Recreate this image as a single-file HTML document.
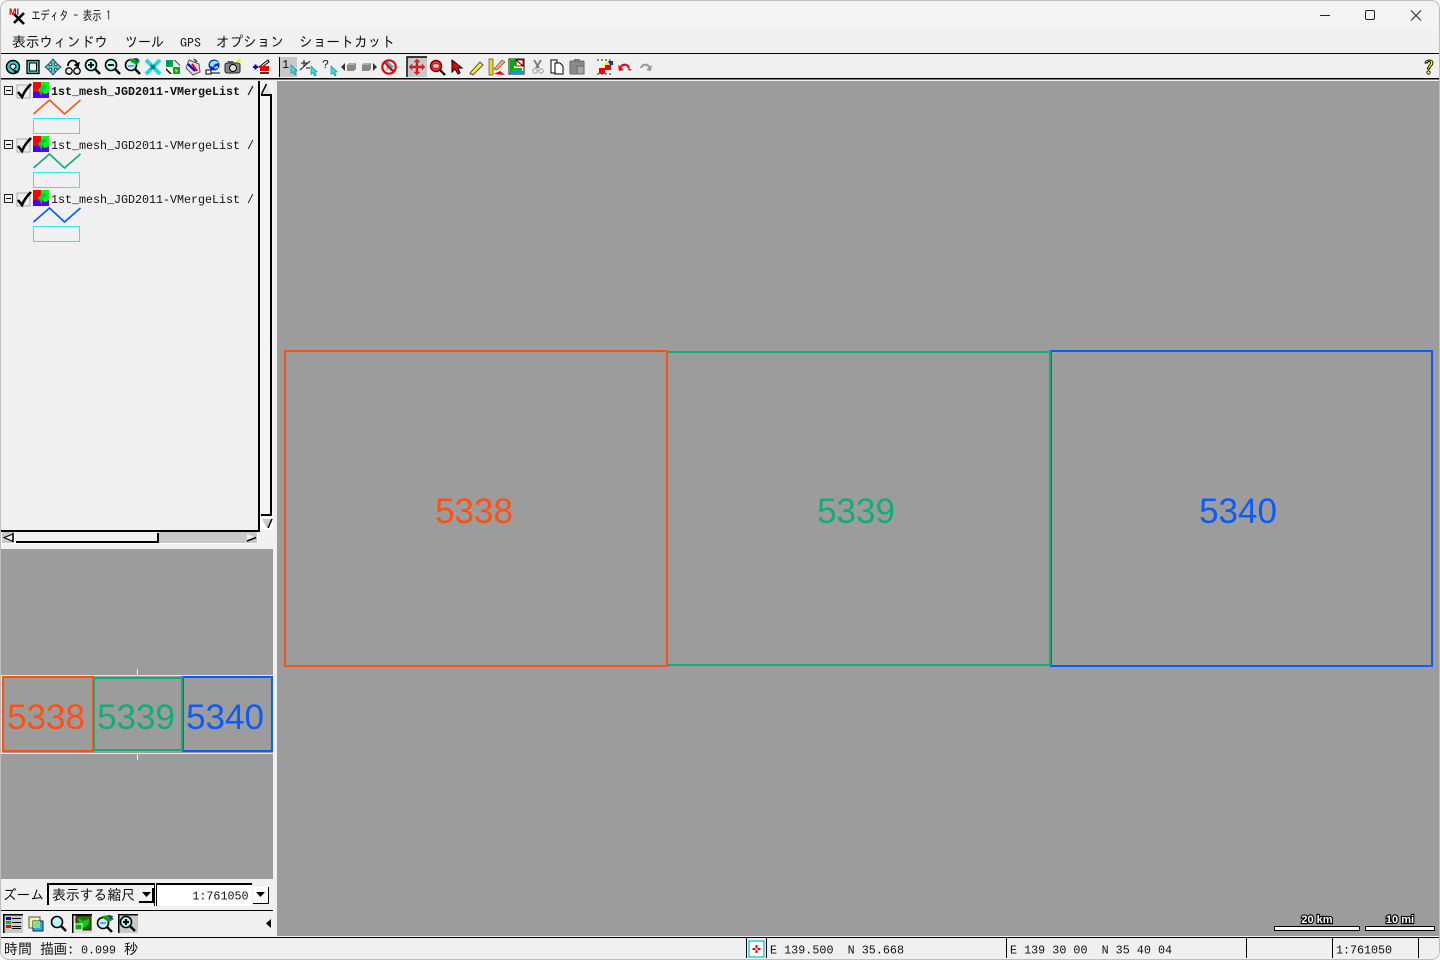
<!DOCTYPE html>
<html><head><meta charset="utf-8"><title>エディタ - 表示 1</title>
<style>
html,body{margin:0;padding:0;background:#fff;overflow:hidden}
svg{display:block}
.jp{font-family:"IPAGothic","Liberation Sans","Noto Sans CJK JP",sans-serif;fill:#111}
.mono{font-family:"Liberation Mono","IPAGothic",monospace;fill:#111}
.lab{font-family:"Liberation Sans",sans-serif;font-size:35px}
.scale{font-family:"Liberation Sans",sans-serif;font-size:11px;font-weight:bold;fill:#fff;stroke:#000;stroke-width:2.2px;paint-order:stroke}
</style></head><body>
<svg width="1440" height="960" viewBox="0 0 1440 960" xmlns="http://www.w3.org/2000/svg">
<defs>
<g id="mag"><circle cx="-1" cy="-1" r="5.5" fill="#bff" stroke="#000" stroke-width="1.6"/><path d="M3 3l5 5" stroke="#000" stroke-width="2.4" fill="none"/></g>
<g id="cur"><path d="M0 0v8.500l2-1.700 1.700 3.200 1.600-.8-1.600-3.200h2.600z" fill="#2fe0e8" stroke="#0a8a9a" stroke-width=".6"/></g>
<g id="lay"><rect x="0" y="0" width="16" height="16" fill="#0f0"/><path d="M0 0h8v5l-3 3 3 3-2 5H0z" fill="#f00"/><path d="M0 10h5l3 3v3H0z" fill="#40f"/><path d="M8 4c5-3 7 1 4 3l-3 1 3 2-4 1-2-3z" fill="#0c4"/><path d="M9 10c2 3 5 2 7 0v6H8z" fill="#50f"/></g>
<g id="chk"><rect x="0" y="1" width="13" height="13" fill="#eee" stroke="#aaa"/><path d="M1 8l4 5c2-5 5-9 9-13" fill="none" stroke="#000" stroke-width="2.6"/></g>
<g id="minus"><rect x=".5" y=".5" width="8" height="8" fill="#f0f0f0" stroke="#222"/><path d="M2 4.500h5" stroke="#000"/></g>
</defs>

<!-- window -->
<rect x="0" y="0" width="1440" height="960" fill="#f0f0f0"/>
<rect x="0" y="0" width="1440" height="30" fill="#f3f3f3"/>
<rect x="0" y="53" width="1440" height="1" fill="#000"/>
<rect x="0" y="78" width="1440" height="1.500" fill="#000"/>

<!-- title -->
<g transform="translate(9,7)">
<text x="0" y="8" font-family="Liberation Sans,sans-serif" font-size="9" font-weight="bold" fill="#d00">MI</text>
<path d="M5 7l10 10M15 6L5 16" stroke="#000" stroke-width="2.600" fill="none"/>
</g>
<text class="jp" x="31" y="20" font-size="13" textLength="80" lengthAdjust="spacingAndGlyphs">エディタ - 表示 1</text>
<path d="M1320 15.500h10" stroke="#222" stroke-width="1"/>
<rect x="1365.500" y="10.500" width="9" height="9" rx="1.500" fill="none" stroke="#222" stroke-width="1"/>
<path d="M1411 10.500l10 10M1421 10.500l-10 10" stroke="#222" stroke-width="1"/>

<!-- menu -->
<g class="jp">
<text class="jp" font-size="14.500" x="12" y="47" textLength="96" lengthAdjust="spacingAndGlyphs">表示ウィンドウ</text>
<text class="jp" font-size="14.500" x="125" y="47" textLength="39" lengthAdjust="spacingAndGlyphs">ツール</text>
<text class="jp" x="180" y="47" font-size="12" textLength="21" lengthAdjust="spacingAndGlyphs">GPS</text>
<text class="jp" font-size="14.500" x="216" y="47" textLength="68" lengthAdjust="spacingAndGlyphs">オプション</text>
<text class="jp" font-size="14.500" x="299" y="47" textLength="96" lengthAdjust="spacingAndGlyphs">ショートカット</text>
</g>

<!-- toolbar 1 -->
<g transform="translate(13,67)"><circle r="6.500" fill="#3cc" stroke="#000" stroke-width="1.500"/><path d="M-3 0a3 3 0 0 1 6 0l-3 3z" fill="#f0f0f0" stroke="#000"/><path d="M-1 2l4 5 3-2z" fill="#000"/></g>
<g transform="translate(33,67)"><rect x="-6" y="-6.500" width="12" height="13" fill="#4cc" stroke="#000" stroke-width="1.300"/><rect x="-3.500" y="-4" width="7" height="8" fill="#eee" stroke="#000"/></g>
<g transform="translate(53,67)"><path d="M0-8l3.500 4H1.500v2.500H4V-3.500l4 3.500-4 3.500V1.500H1.500V4h2L0 8l-3.500-4h2V1.500H-4v2L-8 0l4-3.500v2h2.500V-4h-2z" fill="#4cc" stroke="#234" stroke-width=".8"/></g>
<g transform="translate(73,67)" fill="none" stroke="#000" stroke-width="1.300"><circle cx="-4" cy="4" r="3.200" fill="#eee"/><circle cx="4" cy="4" r="3.200" fill="#eee"/><path d="M-5-1c0-7 8-7 9-2" stroke-width="1.800"/><path d="M6-4l-1 4-3-2z" fill="#000"/></g>
<g transform="translate(92,66)"><use href="#mag"/><path d="M-4-1h6M-1-4v6" stroke="#000" stroke-width="1.800"/></g>
<g transform="translate(112,66)"><use href="#mag"/><path d="M-4-1h6" stroke="#000" stroke-width="1.800"/></g>
<g transform="translate(132,66)"><use href="#mag"/><path d="M-3-7l8-1 3 3-3 4-6-3z" fill="#0a0"/><path d="M2-8l5 1-2 3z" fill="#60f"/><path d="M-4 0h6" stroke="#80f"/></g>
<g transform="translate(153,67)"><path d="M-7-7L7 7M7-7L-7 7" stroke="#25d5e0" stroke-width="4"/><path d="M-2-2L2 2M2-2L-2 2" stroke="#066" stroke-width="1.500"/><path d="M-8-1h5M3-1h5M-8 1h5M3 1h5" stroke="#f0f0f0" stroke-width=".01"/></g>
<g transform="translate(173,67)"><path d="M-7-7h7v7h-7z" fill="#0a3"/><path d="M-6-6l3 1-1 3-2-1z" fill="#06f"/><path d="M0 0h7v7H0z" fill="#0a3"/><path d="M2 2l3 1-2 3z" fill="#fc0"/><path d="M1-7l6 6v-1L2-7zM-7 1l6 6h-2l-4-4z" fill="#000"/></g>
<g transform="translate(193,67)"><path d="M-4-7l10 4 1 8-7 3-7-7z" fill="#ddd" stroke="#555"/><path d="M-5-3l7 7" stroke="#00e" stroke-width="2.200"/><path d="M-1-3l5 7" stroke="#e00" stroke-width="2"/><path d="M1-8l3 3" stroke="#333" stroke-width="1.500"/></g>
<g transform="translate(213,67)"><circle cx="1" cy="-2" r="5.500" fill="#12d"/><path d="M-3-4c3-3 6-3 9 0l-4 1-2 3-3-1zM1 0l4-1v2l-3 1z" fill="#8ef"/><rect x="-7" y="3" width="5" height="4" fill="#fff" stroke="#000"/><path d="M-2 6h9" stroke="#000"/></g>
<g transform="translate(233,67)"><rect x="-8" y="-4" width="15" height="10" rx="2" fill="#888" stroke="#222"/><circle cx="0" cy="1" r="3.500" fill="#ddd" stroke="#000"/><path d="M-5-6h5l1 2h-7z" fill="#555"/><circle cx="6" cy="-6" r="2.200" fill="#ee3"/></g>
<g transform="translate(261,67)"><path d="M-8 0h5M-5.500-2.500v5" stroke="#00d" stroke-width="2"/><path d="M-2 0L7-7l1 2-7 5z" fill="#fff" stroke="#000"/><rect x="-1" y="-1" width="9" height="5" fill="#e00"/><path d="M-1 6h9" stroke="#000" stroke-width="1.500"/></g>

<rect x="279" y="57" width="1" height="20" fill="#000"/>
<rect x="280" y="57" width="17" height="20" fill="#c8c8c8"/>
<text class="mono" x="282" y="68" font-size="12">1</text>
<use href="#cur" transform="translate(291,65)"/>
<path d="M301 63h6M304 60v6M300 70l10-9M306 68h4" stroke="#111" fill="none"/>
<use href="#cur" transform="translate(311,66)"/>
<text class="mono" x="322" y="68" font-size="12">?</text>
<use href="#cur" transform="translate(331,66)"/>
<path d="M341 67l4-4v8z" fill="#333"/><path d="M347 65l2-2h7v6l-2 2h-7z" fill="#888"/><path d="M349 63h7l-2 2h-7z" fill="#aaa"/>
<path d="M362 65l2-2h7v6l-2 2h-7z" fill="#888"/><path d="M364 63h7l-2 2h-7z" fill="#aaa"/><path d="M377 67l-4-4v8z" fill="#333"/>
<circle cx="389" cy="67" r="6.700" fill="#eee" stroke="#e00" stroke-width="2.200"/><use href="#cur" transform="translate(387,61)"/><path d="M384.500 62l9.500 10" stroke="#e00" stroke-width="2.200"/>

<rect x="407" y="57" width="20" height="20" fill="#c8c8c8"/><path d="M407 77V57h20" fill="none" stroke="#000" stroke-width="1.400"/>
<path d="M417 59l3 3h-2v4h4v-2l3 3-3 3v-2h-4v4h2l-3 3-3-3h2v-4h-4v2l-3-3 3-3v2h4v-4h-2z" fill="#e02020" stroke="#800" stroke-width=".3"/>
<g transform="translate(436,66)"><circle cx="0" cy="0" r="5.500" fill="#f33" stroke="#800" stroke-width="1.500"/><rect x="-3" y="-2" width="6" height="4" fill="#fdd" stroke="#900" stroke-width=".7"/><path d="M4 4l5 5" stroke="#000" stroke-width="2.200"/></g>
<path d="M452 60v12l3-3 3 5 2-1-2-5h4z" fill="#e00" stroke="#000"/>
<g transform="translate(477,67)"><path d="M-7 6l10-11 3 3L-4 8z" fill="#ee3" stroke="#333" stroke-width=".8"/><path d="M-7 6l-1 2 3 0z" fill="#f88"/></g>
<g transform="translate(497,67)"><rect x="-8" y="-8" width="4" height="16" fill="#e8d820" stroke="#333" stroke-width=".6"/><path d="M-3 7l6-3 5 4z" fill="#e00"/><path d="M-3 2L5-7l3 2-8 8z" fill="#fa6" stroke="#444" stroke-width=".6"/></g>
<g transform="translate(517,67)"><rect x="-8" y="-8" width="15" height="15" fill="#fff" stroke="#111"/><path d="M-7-7h6v6h-2v8h-4z" fill="#0a0"/><path d="M-7 4h14v3H-7z" fill="#09f"/><path d="M-4 1h9v3h-9z" fill="#0b3"/><rect x="-1" y="-7" width="7" height="6" fill="#fff" stroke="#d00"/><path d="M-1-7l7 6" stroke="#000"/></g>
<g stroke="#999" fill="none"><path d="M534 60l5 8M541 60l-5 8" stroke-width="1.800" stroke="#777"/><circle cx="535" cy="71" r="2.200"/><circle cx="541" cy="71" r="2.200"/></g>
<path d="M551 60h6v4h-2v9h-4z" fill="#fff" stroke="#000"/><path d="M555 63h5l3 3v8h-8z" fill="#fff" stroke="#000"/>
<rect x="570" y="61" width="14" height="13" rx="1" fill="#8a8a8a" stroke="#666"/><path d="M574 61h6v-2h-6z" fill="#777"/><rect x="577" y="66" width="7" height="8" fill="#a5a5a5" stroke="#666"/>

<g transform="translate(605,67)"><path d="M-8-7h16M-8 7h16" stroke="#222" stroke-dasharray="2 2"/><path d="M-6 1h6v6h-6z" fill="#e00"/><path d="M0-2h6v5H0z" fill="#e00"/><path d="M-3-2L3-6h5l-3 4H-1z" fill="#ee2"/><path d="M3-6h5v4H5z" fill="#22d"/></g>
<path d="M620 69c1-5 7-6 9-1" fill="none" stroke="#f00318" stroke-width="2.200"/><path d="M618 65l1 6 5-1z" fill="#f00318"/><path d="M631 70l-3-1" stroke="#f00318" stroke-width="1.500"/>
<path d="M650 69c-1-5-7-6-9-1" fill="none" stroke="#999" stroke-width="2.200"/><path d="M652 65l-1 6-5-1z" fill="#999"/>

<path d="M1425 63c1-4 8-4 8 0 0 3-3 3-3.500 6h-2c0-3 3-4 3-6s-3-2-3 0z" fill="#ff3" stroke="#000" stroke-width=".9"/><circle cx="1428.500" cy="72.500" r="1.700" fill="#ff3" stroke="#000" stroke-width=".8"/>

<!-- layer panel -->
<g>
<use href="#minus" x="4" y="86"/><use href="#chk" x="17" y="84"/><use href="#lay" x="33" y="82"/>
<text class="mono" x="51" y="95" font-size="11.700" font-weight="bold" textLength="203" lengthAdjust="spacing">1st_mesh_JGD2011-VMergeList /</text>
<path d="M33.500 114l16-14 15 14 16-14" fill="none" stroke="#ff5a14" stroke-width="1.700"/>
<rect x="33.500" y="118.500" width="46" height="15" fill="#f0f0f0" stroke="#2fe8e8"/>
<use href="#minus" x="4" y="140"/><use href="#chk" x="17" y="138"/><use href="#lay" x="33" y="136"/>
<text class="mono" x="51" y="149" font-size="11.700" textLength="203" lengthAdjust="spacing">1st_mesh_JGD2011-VMergeList /</text>
<path d="M33.500 168l16-14 15 14 16-14" fill="none" stroke="#0fae78" stroke-width="1.700"/>
<rect x="33.500" y="172.500" width="46" height="15" fill="#f0f0f0" stroke="#2fe8e8"/>
<use href="#minus" x="4" y="194"/><use href="#chk" x="17" y="192"/><use href="#lay" x="33" y="190"/>
<text class="mono" x="51" y="203" font-size="11.700" textLength="203" lengthAdjust="spacing">1st_mesh_JGD2011-VMergeList /</text>
<path d="M33.500 222l16-14 15 14 16-14" fill="none" stroke="#0a5cff" stroke-width="1.700"/>
<rect x="33.500" y="226.500" width="46" height="15" fill="#f0f0f0" stroke="#2fe8e8"/>
</g>

<!-- scrollbars -->
<g shape-rendering="crispEdges">
<rect x="258" y="81" width="2" height="451" fill="#000"/>
<rect x="0" y="530" width="260" height="2" fill="#000"/>
<rect x="260" y="81" width="13" height="437" fill="#f4f4f4"/>
<rect x="270" y="96" width="2" height="420" fill="#000"/>
<rect x="261" y="514" width="11" height="2" fill="#000"/>
<rect x="261" y="94" width="11" height="2" fill="#000"/>
<rect x="260" y="517" width="13" height="13" fill="#fff"/>
<rect x="0" y="532" width="258" height="12" fill="#fff"/>
<rect x="2" y="532" width="12" height="11" fill="#c8c8c8"/>
<rect x="16" y="532" width="142" height="9" fill="#f0f0f0"/>
<rect x="16" y="541" width="143" height="2" fill="#000"/>
<rect x="157" y="533" width="2" height="10" fill="#000"/>
<rect x="159" y="532" width="87" height="11" fill="#c8c8c8"/>
<rect x="246" y="532" width="11" height="11" fill="#c8c8c8"/>
</g>
<path d="M261.500 94l5-10 5 10z" fill="#e4e4e4"/><path d="M261.500 94l5-10" stroke="#000" stroke-width="1.400" fill="none"/>
<path d="M262 519h10l-5 9z" fill="#c8c8c8"/><path d="M272 519l-4 9" stroke="#000" stroke-width="1.500"/>
<path d="M13 534L4 537.500l9 4" fill="#eee" stroke="#000" stroke-width="1"/><path d="M13 533v9" stroke="#000" stroke-width="1.500"/>
<path d="M247 534l9 3.500-9 4z" fill="#eee"/><path d="M247 541l9-3.500" stroke="#000" stroke-width="1.500"/>

<!-- overview -->
<g shape-rendering="crispEdges">
<rect x="1" y="549" width="272" height="330" fill="#9c9c9c"/>
<rect x="1" y="675" width="272" height="1" fill="#ffff44"/>
<rect x="1" y="753" width="272" height="1" fill="#ffff44"/>
<rect x="1" y="675" width="1" height="79" fill="#ffff44"/>
<rect x="137" y="669" width="1" height="6" fill="#ffff44"/>
<rect x="137" y="754" width="1" height="6" fill="#ffff44"/>
</g>
<g fill="none" stroke-width="2" shape-rendering="crispEdges">
<rect x="183" y="677" width="89" height="74" stroke="#0a5cff"/>
<rect x="94" y="678" width="88" height="72" stroke="#0fae78"/>
<rect x="3" y="677" width="90" height="74" stroke="#ff5014"/>
</g>
<text class="lab" x="46" y="729" text-anchor="middle" fill="#ff5014">5338</text>
<text class="lab" x="136" y="729" text-anchor="middle" fill="#0fae78">5339</text>
<text class="lab" x="225" y="729" text-anchor="middle" fill="#0a5cff">5340</text>

<!-- zoom row -->
<text class="jp" x="3" y="900" font-size="14.500" textLength="41" lengthAdjust="spacingAndGlyphs">ズーム</text>
<g shape-rendering="crispEdges">
<rect x="47" y="883" width="108" height="2" fill="#000"/>
<rect x="47" y="883" width="2" height="22" fill="#000"/>
<rect x="49" y="905" width="107" height="1" fill="#fff"/>
<rect x="154" y="883" width="1" height="23" fill="#000"/>
<rect x="139" y="888" width="15" height="14" fill="#f4f4f4"/>
<rect x="139" y="901" width="14" height="2" fill="#000"/><rect x="152" y="888" width="2" height="15" fill="#000"/>
<rect x="156" y="885" width="96" height="21" fill="#fff"/>
<rect x="156" y="883" width="96" height="2" fill="#000"/>
<rect x="156" y="883" width="1" height="23" fill="#000"/>
<rect x="253" y="887" width="16" height="16" fill="#fff"/>
<rect x="253" y="903" width="16" height="1" fill="#000"/><rect x="268" y="887" width="1" height="17" fill="#000"/>
</g>
<text class="jp" x="52" y="900" font-size="14.500" textLength="83" lengthAdjust="spacingAndGlyphs">表示する縮尺</text>
<path d="M142 892h9l-4.500 5z" fill="#000"/><path d="M256 892h9l-4.500 5z" fill="#000"/>
<text class="mono" x="248.500" y="899.500" font-size="11.700" text-anchor="end">1:761050</text>

<!-- bottom toolbar -->
<rect x="0" y="910" width="273" height="1" fill="#000"/>
<g shape-rendering="crispEdges">
<rect x="3" y="914" width="20" height="19" fill="#c8c8c8"/><rect x="3" y="914" width="20" height="1.500" fill="#000"/><rect x="3" y="914" width="1.500" height="19" fill="#000"/>
<rect x="6" y="917" width="5" height="3" fill="#00d"/><rect x="6" y="921" width="5" height="3" fill="#0b0"/><rect x="6" y="925" width="5" height="3" fill="#e00"/>
<rect x="12" y="918" width="9" height="1" fill="#000"/><rect x="12" y="922" width="9" height="1" fill="#000"/><rect x="12" y="926" width="9" height="1" fill="#000"/><rect x="12" y="928" width="9" height="1" fill="#000"/>
<rect x="72" y="914" width="20" height="19" fill="#ddd"/><rect x="72" y="914" width="20" height="1.500" fill="#000"/><rect x="72" y="914" width="1.500" height="19" fill="#000"/>
<rect x="118" y="914" width="20" height="19" fill="#c8c8c8"/><rect x="118" y="914" width="1.500" height="19" fill="#000"/><rect x="118" y="914" width="20" height="1.500" fill="#000"/>
</g>
<rect x="29" y="917" width="11" height="11" fill="#f6f6a0" stroke="#555"/><rect x="33" y="921" width="10" height="10" fill="#18b4e8" stroke="#222"/><rect x="33" y="921" width="7" height="7" fill="#8fd890"/>
<g transform="translate(58,923)"><use href="#mag"/></g>
<rect x="76" y="916" width="15" height="14" fill="#0a7a10" stroke="#700"/><path d="M78 918l5 3 6-2v5l-5 4-4-3z" fill="#1cc01c"/><rect x="75" y="924" width="7" height="6" fill="#0a0" stroke="#fff"/>
<g transform="translate(104,924)"><use href="#mag"/><path d="M-2-8l8-1 4 4-5 3-5-3z" fill="#0a0"/><path d="M4-9l5 1-2 4z" fill="#60f"/><path d="M-4-1h6" stroke="#80f"/></g>
<g transform="translate(127,923)"><use href="#mag"/><path d="M-4-1h6M-1-4v6" stroke="#000" stroke-width="2.200"/></g>
<path d="M271 919v9l-5-4.500z" fill="#000"/>

<!-- main map -->
<rect x="277" y="81" width="1162" height="855" fill="#9c9c9c"/>
<g fill="none" stroke-width="2" shape-rendering="crispEdges">
<rect x="1051" y="351" width="381" height="315" stroke="#0a5cff"/>
<rect x="667" y="352" width="383" height="313" stroke="#0fae78"/>
<rect x="285" y="351" width="382" height="315" stroke="#ff5014"/>
</g>
<text class="lab" x="474" y="523" text-anchor="middle" fill="#ff5014">5338</text>
<text class="lab" x="856" y="523" text-anchor="middle" fill="#0fae78">5339</text>
<text class="lab" x="1238" y="523" text-anchor="middle" fill="#0a5cff">5340</text>

<!-- scale -->
<rect x="1274.500" y="926.500" width="85" height="4" fill="#fff" stroke="#000"/>
<rect x="1365.500" y="926.500" width="69" height="4" fill="#fff" stroke="#000"/>
<text class="scale" x="1317" y="923" text-anchor="middle">20 km</text>
<text class="scale" x="1400" y="923" text-anchor="middle">10 mi</text>

<!-- status -->
<rect x="0" y="937" width="1440" height="1" fill="#000"/>
<g fill="#000" shape-rendering="crispEdges">
<rect x="746" y="938" width="1" height="20"/><rect x="766" y="938" width="1" height="20"/>
<rect x="1006" y="938" width="1" height="20"/><rect x="1246" y="938" width="1" height="20"/>
<rect x="1332" y="938" width="1" height="20"/><rect x="1418" y="938" width="1" height="20"/>
</g>
<rect x="749" y="941" width="15" height="16" fill="#fff" stroke="#1fd0e0" stroke-width="1.500"/>
<path d="M756.500 945v8M752.500 949h8" stroke="#e00" stroke-width="2"/><rect x="755.500" y="948" width="2" height="2" fill="#fff"/>
<text class="jp" x="4" y="954" font-size="14.500" textLength="28" lengthAdjust="spacingAndGlyphs">時間</text>
<text class="jp" x="40" y="954" font-size="14.500" textLength="34" lengthAdjust="spacingAndGlyphs">描画:</text>
<text class="mono" x="81" y="953.500" font-size="11.700" textLength="35" lengthAdjust="spacing">0.099</text>
<text class="jp" x="124" y="954" font-size="14.500">秒</text>
<text class="mono" x="770" y="953.500" font-size="11.700" xml:space="preserve" textLength="134" lengthAdjust="spacing">E 139.500  N 35.668</text>
<text class="mono" x="1010" y="953.500" font-size="11.700" xml:space="preserve" textLength="162" lengthAdjust="spacing">E 139 30 00  N 35 40 04</text>
<text class="mono" x="1336" y="953.500" font-size="11.700" textLength="56" lengthAdjust="spacing">1:761050</text>

<!-- window edge -->
<rect x=".5" y=".5" width="1439" height="959" rx="8" fill="none" stroke="#bdbdbd"/>
<path d="M0 8V0h8A8 8 0 0 0 0 8zM1432 0h8v8a8 8 0 0 0-8-8zM0 952v8h8a8 8 0 0 1-8-8zM1440 952v8h-8a8 8 0 0 0 8-8z" fill="#fff"/>
</svg>
</body></html>
